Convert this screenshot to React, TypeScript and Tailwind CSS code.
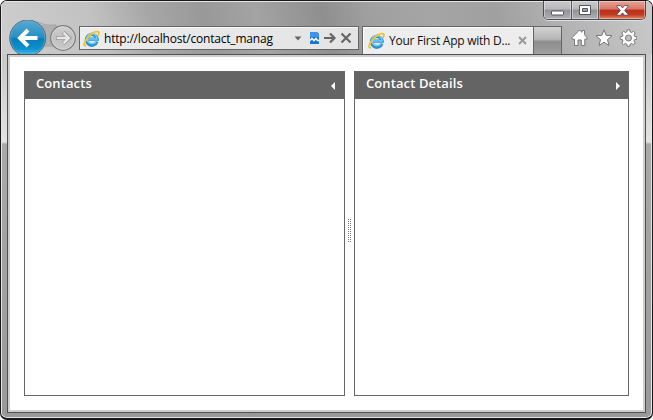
import React from "react";

function IeLogo({ className }: { className?: string }) {
  return (
    <svg className={className} width="17" height="17" viewBox="0 0 18 18" fill="none">
      <path d="M14.8 12.200A5.700 5.700 0 1 1 15 9.600H4.500" stroke="#2b93d3" strokeWidth="3.400" />
      <path d="M13.900 11.900A5.300 5.300 0 1 1 14.700 9.500H4.600" stroke="#78cdf4" strokeWidth="1.700" />
      <path
        d="M3.200 16.600C.2 17.200.6 13.400 3.600 9.400 7.300 4.300 13.600.6 16 1.800c1.200.6 1 2.300.1 4.200"
        stroke="#f0b818"
        strokeWidth="1.700"
      />
      <path
        d="M2.400 15.600C1.200 14.600 2.300 11.800 4.500 9.100 8 4.700 13.400 1.300 15.600 2.200"
        stroke="#ffd83a"
        strokeWidth="1"
      />
    </svg>
  );
}

function NavButtons() {
  return (
    <svg className="block shrink-0" width="71" height="34" viewBox="0 0 71 34">
      <defs>
        <linearGradient id="back" x1="0" y1="0" x2="0" y2="1">
          <stop offset="0" stopColor="#58a9cf" />
          <stop offset=".48" stopColor="#268fc6" />
          <stop offset=".52" stopColor="#087dbb" />
          <stop offset=".8" stopColor="#0d91cf" />
          <stop offset="1" stopColor="#58c7ef" />
        </linearGradient>
        <linearGradient id="fwd" x1="0" y1="0" x2="0" y2="1">
          <stop offset="0" stopColor="#d0d0d0" />
          <stop offset=".5" stopColor="#c0c0c0" />
          <stop offset="1" stopColor="#cbcbcb" />
        </linearGradient>
      </defs>
      <path d="M28 2Q35 7 49 5V27H32Z" fill="#b0b0b0" />
      <path d="M29 1.500Q36 6 48 5" stroke="#9a9a9a" fill="none" strokeWidth=".8" />
      <circle cx="19.700" cy="18" r="18" fill="url(#back)" stroke="#5d6d76" />
      <circle cx="19.700" cy="18" r="17" fill="none" stroke="#73b8d8" strokeWidth=".7" opacity=".7" />
      <path d="M29.500 18H12M20 10l-8 8 8 8" stroke="#fff" strokeWidth="3.900" fill="none" />
      <circle cx="55" cy="18" r="12.300" fill="url(#fwd)" stroke="#7b7b7b" strokeWidth="1.200" />
      <circle cx="55" cy="18" r="11.200" fill="none" stroke="#dadada" strokeWidth=".7" />
      <path d="M48 18H60M55.300 12.300l5.700 5.700-5.700 5.700" stroke="#969696" strokeWidth="4" fill="none" />
      <path d="M48.700 18H60M55.500 12.700l5.300 5.300-5.300 5.300" stroke="#e7e7e7" strokeWidth="2.500" fill="none" />
    </svg>
  );
}

function AddressBar() {
  return (
    <div className="mt-[6px] flex h-[24px] w-[280px] shrink-0 items-center border border-[#666] bg-[linear-gradient(90deg,#ececec,#e4e4e4)] pl-[3px] shadow-[inset_0_1px_0_#f8f8f8]">
      <IeLogo className="shrink-0" />
      <span className="ml-1 mt-[2px] w-[190px] whitespace-nowrap font-['Open_Sans',sans-serif] text-[12px] leading-[20px] tracking-[-0.2px] text-black">
        http://localhost/contact_manag
      </span>
      <svg width="62" height="20" viewBox="0 0 62 20" className="shrink-0">
        <path d="M.5 8.500h7l-3.500 4z" fill="#666" />
        <path d="M16 4h7l2 2v10h-9z" fill="#1c73cb" />
        <path d="M16 4h7l2 2v3h-9z" fill="#3d93e6" />
        <path d="m16 12.500 2-2 2 2 2-2 1.500 2H25" stroke="#f1f7ff" fill="none" strokeWidth="1.700" />
        <path d="M30 10h10M36 5.500l4.500 4.500-4.500 4.500" stroke="#666" fill="none" strokeWidth="2.200" />
        <path d="m47.500 5.500 9 9m0-9-9 9" stroke="#666" strokeWidth="2.200" />
      </svg>
    </div>
  );
}

function BrowserTab() {
  return (
    <div className="ml-[3px] mt-[6px] flex h-[28px] w-[172px] shrink-0 items-center border border-b-0 border-[#666] bg-[#ededed] pl-[5px] shadow-[inset_1px_1px_0_#fbfbfb]">
      <IeLogo className="mt-[-1px] shrink-0" />
      <span className="ml-1 w-[129px] whitespace-nowrap font-['Open_Sans',sans-serif] text-[12px] leading-[20px] tracking-[-0.25px] text-[#111]">
        Your First App with D...
      </span>
      <svg width="9" height="9" viewBox="0 0 9 9" className="mt-[-1px] shrink-0">
        <path d="m1 1 7 7m0-7-7 7" stroke="#999" strokeWidth="2" />
      </svg>
    </div>
  );
}

function CommandIcons() {
  return (
    <svg width="66" height="18" viewBox="0 0 66 18" className="ml-[9px] mt-[9px] block shrink-0">
      <g stroke="#777" strokeWidth="1" fill="#fff" strokeLinejoin="round">
        <path d="m8.500 1 2.500 2.300V1.500h2.500v4.200L16 8.700v1.500h-2.200v6.300h-3.500V11H7v5.500H3.500v-6.300H1V8.700z" />
        <path d="m33 .8 2.100 5.500 5.900.4-4.500 3.900 1.500 5.900-5-3.300-5 3.300 1.500-5.900L25 6.700l5.900-.4z" />
        <path
          fillRule="evenodd"
          d="M56.300.7h2.400l.5 2.200 1.300.6 2-1.200L64.200 4l-1.200 2 .5 1.300 2.300.5v2.400l-2.300.5-.5 1.300 1.200 2-1.700 1.700-2-1.200-1.300.6-.5 2.200h-2.400l-.5-2.200-1.300-.6-2 1.200-1.700-1.700 1.200-2-.5-1.300-2.300-.5V7.800l2.300-.5.5-1.300-1.200-2L52.500 2.300l2 1.200 1.300-.6zM57.500 6a3 3 0 1 0 0 6 3 3 0 0 0 0-6z"
        />
      </g>
    </svg>
  );
}

function CaptionButtons() {
  return (
    <div className="mr-[6px] flex h-[19px] overflow-hidden rounded-b-[5px] border border-t-0 border-[#494b56] shadow-[0_1px_0_#e0e0e0]">
      <div className="flex w-[28px] items-center justify-center border-r border-[#555762] bg-[linear-gradient(#c9c9ca_0%,#b8b8ba_45%,#929296_50%,#b0b0b2_100%)] shadow-[inset_0_0_0_1px_#ffffff66]">
        <svg width="13" height="7" viewBox="0 0 13 7" className="mt-[7px]">
          <rect x=".5" y="1" width="12" height="4" rx=".8" fill="#fff" stroke="#515461" />
        </svg>
      </div>
      <div className="flex w-[27px] items-center justify-center border-r border-[#555762] bg-[linear-gradient(#c9c9ca_0%,#b8b8ba_45%,#929296_50%,#b0b0b2_100%)] shadow-[inset_0_0_0_1px_#ffffff66]">
        <svg width="12" height="10" viewBox="0 0 12 10">
          <path fillRule="evenodd" d="M.5.500h11v9H.500zM3.500 3.500h5v3H3.500z" fill="#fff" stroke="#515461" />
        </svg>
      </div>
      <div className="flex w-[46px] items-center justify-center bg-[linear-gradient(#e7a396_0%,#d77766_45%,#bd301a_50%,#bf3920_75%,#e68963_100%)] shadow-[inset_0_0_0_1px_#ffffff55]">
        <svg width="13" height="11" viewBox="0 0 13 11">
          <path
            d="M1 .6h3.500l2 2.300 2-2.300H12v1L8.700 5.400l3.300 3.900v1H8.500l-2-2.400-2 2.400H1v-1l3.300-3.900L1 1.600z"
            fill="#fff"
            stroke="#555564"
          />
        </svg>
      </div>
    </div>
  );
}

function Panel({ title, width, arrow }: { title: string; width: string; arrow: "left" | "right" }) {
  return (
    <section className={`h-[325px] shrink-0 border border-[#666] bg-white ${width}`}>
      <header
        className={`flex h-[27px] items-center justify-between bg-[#646464] pl-[11px] ${
          arrow === "left" ? "pr-[9px]" : "pr-[8px]"
        }`}
      >
        <h2 className="mt-[-5px] whitespace-nowrap font-['Open_Sans',sans-serif] text-[13px] font-semibold leading-[18px] tracking-[0.1px] text-white">
          {title}
        </h2>
        <svg width="4" height="8" viewBox="0 0 4 8" className="mt-px">
          <path d={arrow === "left" ? "M4 0v8L0 4z" : "M0 0v8L4 4z"} fill="#fff" />
        </svg>
      </header>
    </section>
  );
}

function SplitHandle() {
  return (
    <div className="flex w-[9px] shrink-0 items-center justify-center">
      <div className="mt-[-6px] grid grid-cols-[1px_1px] gap-px">
        {Array.from({ length: 24 }, (_, i) => (
          <i key={i} className="size-px bg-[#777]" />
        ))}
      </div>
    </div>
  );
}

export default function App() {
  return (
    <div className="h-[420px] w-[653px] overflow-hidden bg-white">
      <div className="flex h-[420px] w-[653px] flex-col overflow-hidden rounded-[7px] border border-b-2 border-[#17171c] bg-[linear-gradient(#d4d3d2_0px,#c7c7c7_54px,#e5e3e2_141px,#aaa9a8_143px,#999_100%)] shadow-[inset_0_0_0_1px_#e5e5e5]">
        <div className="flex h-[53px] shrink-0 flex-col bg-[linear-gradient(75deg,#cecece_0%,#c2c2c2_15%,#a6a6a6_24%,#999_32%,#a3a3a3_40%,#8f8f8f_50%,#a0a0a0_57%,#a5a5a5_66%,#a0a0a0_76%,#b4b4b4_87%,#c9c9c9_100%)] shadow-[inset_1px_1px_0_#e5e5e5]">
          <div className="flex h-[19px] shrink-0 justify-end">
            <CaptionButtons />
          </div>
          <div className="flex h-[34px] items-start overflow-hidden pl-[7px]">
            <NavButtons />
            <AddressBar />
            <BrowserTab />
            <div className="mt-[6px] h-[28px] w-[28px] shrink-0 border border-b-0 border-l-0 border-[#666] bg-[linear-gradient(#d2d2d2,#b5b5b5_45%,#8c8c8c_55%,#a0a0a0)]" />
            <CommandIcons />
          </div>
        </div>
        <main className="mx-[6px] mb-[5px] flex-1 border border-[#505050] bg-white shadow-[inset_0_0_0_2px_#cecece]">
          <div className="flex pl-[16px] pt-[16px]">
            <Panel title="Contacts" width="w-[321px]" arrow="left" />
            <SplitHandle />
            <Panel title="Contact Details" width="w-[275px]" arrow="right" />
          </div>
        </main>
      </div>
    </div>
  );
}
